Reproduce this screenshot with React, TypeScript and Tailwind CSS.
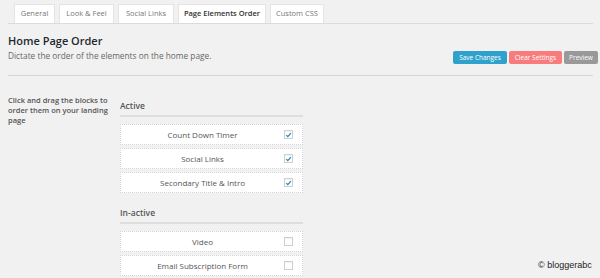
const TABS = ["General", "Look & Feel", "Social Links", "Page Elements Order", "Custom CSS"];
const TAB_W = [41, 55, 56, 88, 54];

const ACTIVE = ["Count Down Timer", "Social Links", "Secondary Title & Intro"];
const INACTIVE = ["Video", "Email Subscription Form"];

function Check({ on }: { on: boolean }) {
  return (
    <span className="flex h-[9px] w-[9px] shrink-0 items-center justify-center border border-[#cfcfcf] bg-white shadow-[inset_0_1px_1px_rgba(0,0,0,0.06)]">
      {on && (
        <svg viewBox="0 0 10 10" width="8" height="8">
          <path d="M1.8 5.2 L4 7.4 L8.4 2.4" fill="none" stroke="#1e8cbe" strokeWidth="1.8" />
        </svg>
      )}
    </span>
  );
}

function Row({ label, on }: { label: string; on: boolean }) {
  return (
    <div className="flex h-[21px] items-center border border-dotted border-[#d4d4d4] bg-white pr-[9px]">
      <span className="flex-1 text-center text-[8px] text-[#555]">{label}</span>
      <Check on={on} />
    </div>
  );
}

function Group({ title, items, on }: { title: string; items: string[]; on: boolean }) {
  return (
    <div>
      <div className="border-b-2 border-[#dedede] pb-[3px] text-[8.5px] leading-[12px] font-semibold text-[#555]">
        {title}
      </div>
      <div className="mt-[7px] flex flex-col gap-[3px]">
        {items.map((t) => (
          <Row key={t} label={t} on={on} />
        ))}
      </div>
    </div>
  );
}

export default function App() {
  return (
    <div
      className="relative h-[278px] w-[600px] overflow-hidden bg-[#f1f1f1] pr-[7px] pl-[8px]"
      style={{ fontFamily: '"Open Sans", sans-serif' }}
    >
      <div className="flex gap-[4px] border-b border-[#dcdcdc] pt-[4px] pl-[6px]">
        {TABS.map((t, i) => (
          <div
            key={t}
            style={{ width: TAB_W[i] }}
            className={
              "flex h-[19px] items-center justify-center border border-b-0 border-[#e4e4e4] bg-white text-[7.5px] " +
              (i === 3 ? "font-semibold text-[#333]" : "text-[#777]")
            }
          >
            {t}
          </div>
        ))}
      </div>

      <div className="flex items-start">
        <div className="pt-[8px]">
          <h2 className="text-[11px] leading-[18px] font-semibold text-[#23282d]">Home Page Order</h2>
          <p className="text-[8.3px] leading-[12px] text-[#666]">
            Dictate the order of the elements on the home page.
          </p>
        </div>
        <div className="-mr-[5px] ml-auto flex gap-[2px] pt-[27px] text-[6.5px] text-white">
          <span className="flex h-[13px] w-[54px] items-center justify-center rounded-[2px] bg-[#2ea2cc]">
            Save Changes
          </span>
          <span className="flex h-[13px] w-[53px] items-center justify-center rounded-[2px] bg-[#f87c7c]">
            Clear Settings
          </span>
          <span className="flex h-[13px] w-[34px] items-center justify-center rounded-[2px] bg-[#999]">
            Preview
          </span>
        </div>
      </div>

      <div className="mt-[11px] border-t border-[#d6d6d6]" />

      <div className="flex pt-[19px]">
        <p className="w-[112px] text-[7.5px] leading-[10px] font-semibold text-[#555]">
          Click and drag the blocks to order them on your landing page
        </p>
        <div className="flex w-[183px] flex-col gap-[14px] pt-[5px]">
          <Group title="Active" items={ACTIVE} on={true} />
          <Group title="In-active" items={INACTIVE} on={false} />
        </div>
      </div>

      <span
        className="absolute top-[259px] left-[538px] text-[9px] text-[#222]"
        style={{ fontFamily: '"Liberation Sans", Arial, sans-serif' }}
      >
        © bloggerabc
      </span>
    </div>
  );
}
